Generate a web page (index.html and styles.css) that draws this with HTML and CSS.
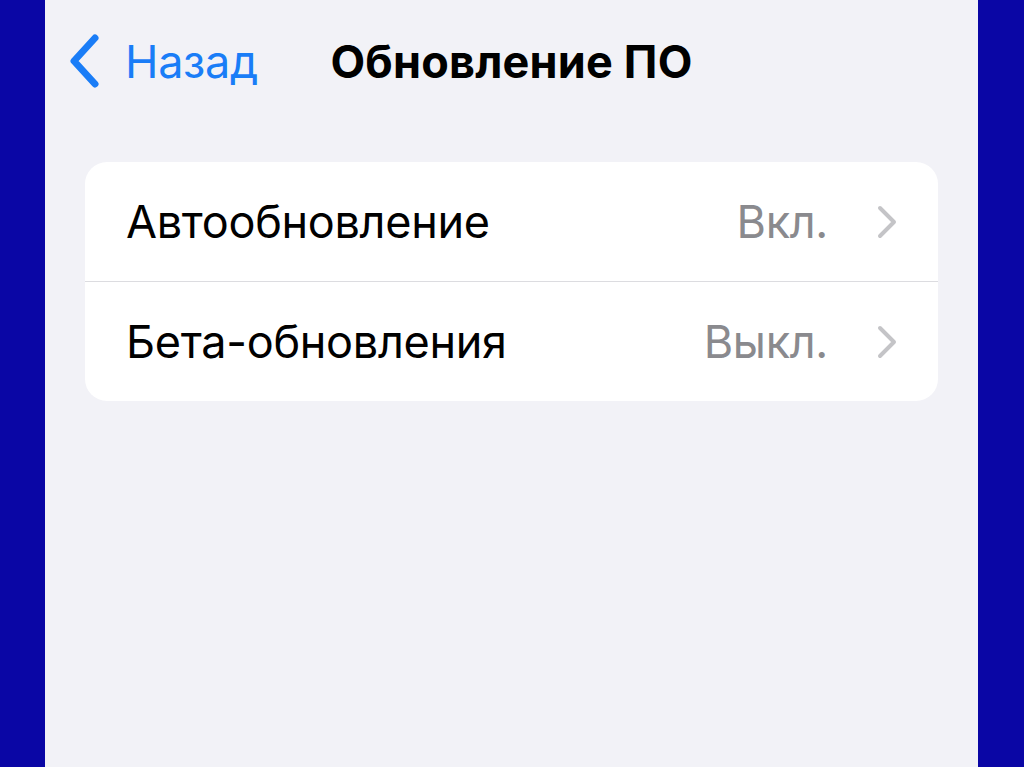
FILE: index.html
```html
<!DOCTYPE html>
<html lang="ru">
<head>
    <meta charset="UTF-8">
    <meta name="viewport" content="width=device-width, initial-scale=1.0">
    <title>Обновление ПО</title>
    <link rel="stylesheet" href="styles.css">
</head>
<body>
    <div class="side-bar"></div>

    <main class="screen">
        <header class="nav-bar">
            <a class="back-link" href="#">
                <svg class="back-chevron" viewBox="0 0 32 54" aria-hidden="true">
                    <path d="M26 4 L5 27 L26 50" />
                </svg>
                <span>Назад</span>
            </a>
            <h1 class="nav-title">Обновление ПО</h1>
            <div></div>
        </header>

        <section class="settings-group">
            <div class="settings-row">
                <span class="row-label">Автообновление</span>
                <span class="row-value">Вкл.</span>
                <svg class="row-chevron" viewBox="0 0 22 34" aria-hidden="true">
                    <path d="M4 3 L18 17 L4 31" />
                </svg>
            </div>
            <div class="settings-row">
                <span class="row-label">Бета-обновления</span>
                <span class="row-value">Выкл.</span>
                <svg class="row-chevron" viewBox="0 0 22 34" aria-hidden="true">
                    <path d="M4 3 L18 17 L4 31" />
                </svg>
            </div>
        </section>
    </main>

    <div class="side-bar"></div>
</body>
</html>
```

FILE: styles.css
```css
/* General Styles */
body {
    margin: 0;
    height: 767px;
    display: flex;
    font-family: 'Inter', 'Roboto', sans-serif;
    background-color: #0a06a5;
    overflow: hidden;
}

.side-bar {
    width: 45px;
    flex-shrink: 0;
    background-color: #0a06a5;
}

.side-bar:last-child {
    width: 46px;
}

.screen {
    flex: 1;
    background-color: #f2f2f7;
}

/* Navigation bar */
.nav-bar {
    display: grid;
    grid-template-columns: 1fr auto 1fr;
    align-items: center;
    height: 122px;
    padding: 0 24px;
}

.back-link {
    display: flex;
    align-items: center;
    gap: 24px;
    color: #1a7df7;
    text-decoration: none;
    font-size: 45px;
    letter-spacing: -0.3px;
}

.back-chevron {
    width: 32px;
    height: 54px;
    fill: none;
    stroke: #1a7df7;
    stroke-width: 7;
    stroke-linecap: round;
    stroke-linejoin: round;
}

.nav-title {
    margin: 0;
    font-size: 45px;
    font-weight: 700;
    color: #000;
    letter-spacing: 0.2px;
}

/* Settings card */
.settings-group {
    margin: 40px 40px 0;
    background-color: #fff;
    border-radius: 22px;
    overflow: hidden;
}

.settings-row {
    display: flex;
    align-items: center;
    height: 119px;
    padding: 0 40px 0 41px;
    font-size: 45px;
    letter-spacing: -0.3px;
}

.settings-row + .settings-row {
    border-top: 1px solid #dcdce0;
}

.row-label {
    flex: 1;
    color: #000;
}

.row-value {
    color: #8a8a8e;
}

.row-chevron {
    width: 22px;
    height: 34px;
    margin-left: 48px;
    fill: none;
    stroke: #c4c4c7;
    stroke-width: 4;
    stroke-linecap: round;
    stroke-linejoin: round;
}
```
